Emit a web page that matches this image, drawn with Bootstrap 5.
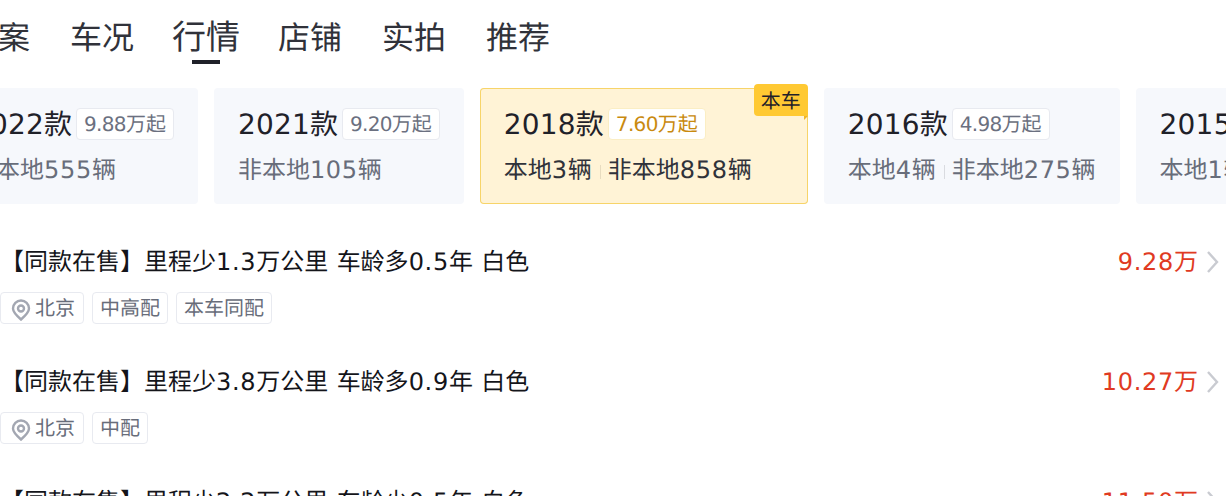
<!doctype html>
<html lang="zh"><head><meta charset="utf-8">
<link rel="stylesheet" href="https://cdn.jsdelivr.net/npm/bootstrap@5.3.0/dist/css/bootstrap.min.css">
<style>
html,body{height:496px;overflow:hidden;background:#fff}
body{font-family:"DejaVu Sans","Noto Sans CJK SC",sans-serif;color:#1f2129;text-rendering:geometricPrecision}
.tabbar{margin-left:-34px;gap:40px;height:88px;padding-top:15px;font-size:32px;line-height:46px;color:#30323a}
.tabitem{position:relative;width:64px;white-space:nowrap}
.tabitem.on{font-size:34px;margin:0 -2px;width:68px}
.tabitem.on::after{content:"";position:absolute;left:20px;top:45px;width:28px;height:4px;background:#1f2129}
.yearstrip{margin-left:-52px;gap:16px;width:max-content}
.yearcard{position:relative;height:116px;padding:20px 24px 0;background:#f6f8fc;border-radius:4px;white-space:nowrap}
.yearcard.here{padding-right:56px;background:#fff3d6;box-shadow:inset 0 0 0 1px #f7d469}
.yearline{height:32px;font-size:28px;line-height:32px;gap:4px}
.yearname{padding-top:2px}
.yearname b{font-weight:400;letter-spacing:.2px}
.fromtag{height:32px;padding:0 7px;font-size:20px;line-height:30px;color:#6b7080;background:#fff;border:1px solid #e8eaf0;border-radius:4px}
.fromtag b{font-weight:400;letter-spacing:-.68px}
.here .fromtag{color:#c98a0f;border-color:#fbeec4}
.subline{margin-top:14px;font-size:24px;line-height:32px;color:#686d7a}
.subline b,.offertitle b,.price b{font-weight:400;letter-spacing:.7px}
.here .subline{color:#30323a}
.sep{display:inline-block;width:1px;height:14px;margin:0 7px 0 8px;background:#d9dbe0;vertical-align:-1px}
.here .sep{background:#e8dcc0}
.thiscar{position:absolute;top:-4px;right:0;width:54px;height:32px;font-size:20px;line-height:34px;text-align:center;color:#1f2129;background:#ffc933;border-radius:4px 4px 0 4px}
.thiscar::after{content:"";position:absolute;right:0;top:32px;border-top:4px solid #eeb52a;border-right:4px solid transparent}
.offers{padding-top:38px;width:1220px}
.offer{height:120px}
.offertitle{font-size:24px;line-height:40px;height:40px;color:#14151a;white-space:nowrap}
.tagline{margin-top:10px;gap:8px}
.chip{height:32px;padding:0 7px;font-size:20px;line-height:30px;color:#686d7a;border:1px solid #e8eaf0;border-radius:4px;white-space:nowrap}
.chip svg{margin:0 4px 0 3px;vertical-align:-6px}
.chip.where{padding-right:8px}
.price{color:#e03a22;font-size:24px;line-height:40px;gap:6px}
</style></head><body>
<div class="tabbar d-flex">
<div class="tabitem">档案</div><div class="tabitem">车况</div><div class="tabitem on">行情</div><div class="tabitem">店铺</div><div class="tabitem">实拍</div><div class="tabitem">推荐</div>
</div>
<div class="yearstrip d-flex">
<div class="yearcard"><div class="yearline d-flex align-items-center"><span class="yearname"><b>2022</b>款</span><span class="fromtag"><b>9.88</b>万起</span></div><div class="subline">非本地<b>555</b>辆</div></div>
<div class="yearcard"><div class="yearline d-flex align-items-center"><span class="yearname"><b>2021</b>款</span><span class="fromtag"><b>9.20</b>万起</span></div><div class="subline">非本地<b>105</b>辆</div></div>
<div class="yearcard here"><div class="yearline d-flex align-items-center"><span class="yearname"><b>2018</b>款</span><span class="fromtag"><b>7.60</b>万起</span></div><div class="subline">本地<b>3</b>辆<i class="sep"></i>非本地<b>858</b>辆</div><div class="thiscar">本车</div></div>
<div class="yearcard"><div class="yearline d-flex align-items-center"><span class="yearname"><b>2016</b>款</span><span class="fromtag"><b>4.98</b>万起</span></div><div class="subline">本地<b>4</b>辆<i class="sep"></i>非本地<b>275</b>辆</div></div>
<div class="yearcard"><div class="yearline d-flex align-items-center"><span class="yearname"><b>2015</b>款</span><span class="fromtag"><b>3.98</b>万起</span></div><div class="subline">本地<b>1</b>辆<i class="sep"></i>非本地<b>99</b>辆</div></div>
</div>
<div class="offers">
<div class="offer d-flex justify-content-between">
<div><div class="offertitle">【同款在售】里程少<b>1.3</b>万公里<b> </b>车龄多<b>0.5</b>年<b> </b>白色</div>
<div class="tagline d-flex"><span class="chip where"><svg width="20" height="22" viewBox="0 0 20 22" fill="none" stroke="#a3a7b2" stroke-width="2.4"><path d="M10 20.5C6 17 2 13.5 2 9.5a8 8 0 0 1 16 0c0 4-4 7.500-8 11z"/><circle cx="10" cy="9.500" r="3"/></svg>北京</span><span class="chip">中高配</span><span class="chip">本车同配</span></div></div>
<div class="price d-flex"><span><b>9.28</b>万</span><svg width="16" height="40" viewBox="0 0 16 40" fill="none" stroke="#c9cbd1" stroke-width="2.4"><path d="M4 10l9 10-9 10"/></svg></div>
</div>
<div class="offer d-flex justify-content-between">
<div><div class="offertitle">【同款在售】里程少<b>3.8</b>万公里<b> </b>车龄多<b>0.9</b>年<b> </b>白色</div>
<div class="tagline d-flex"><span class="chip where"><svg width="20" height="22" viewBox="0 0 20 22" fill="none" stroke="#a3a7b2" stroke-width="2.4"><path d="M10 20.5C6 17 2 13.5 2 9.5a8 8 0 0 1 16 0c0 4-4 7.500-8 11z"/><circle cx="10" cy="9.500" r="3"/></svg>北京</span><span class="chip">中配</span></div></div>
<div class="price d-flex"><span><b>10.27</b>万</span><svg width="16" height="40" viewBox="0 0 16 40" fill="none" stroke="#c9cbd1" stroke-width="2.4"><path d="M4 10l9 10-9 10"/></svg></div>
</div>
<div class="offer d-flex justify-content-between">
<div><div class="offertitle">【同款在售】里程少<b>2.2</b>万公里<b> </b>车龄少<b>0.5</b>年<b> </b>白色</div></div>
<div class="price d-flex"><span><b>11.50</b>万</span><svg width="16" height="40" viewBox="0 0 16 40" fill="none" stroke="#c9cbd1" stroke-width="2.4"><path d="M4 10l9 10-9 10"/></svg></div>
</div>
</div>
<script src="https://cdn.jsdelivr.net/npm/bootstrap@5.3.0/dist/js/bootstrap.bundle.min.js"></script>
</body></html>
